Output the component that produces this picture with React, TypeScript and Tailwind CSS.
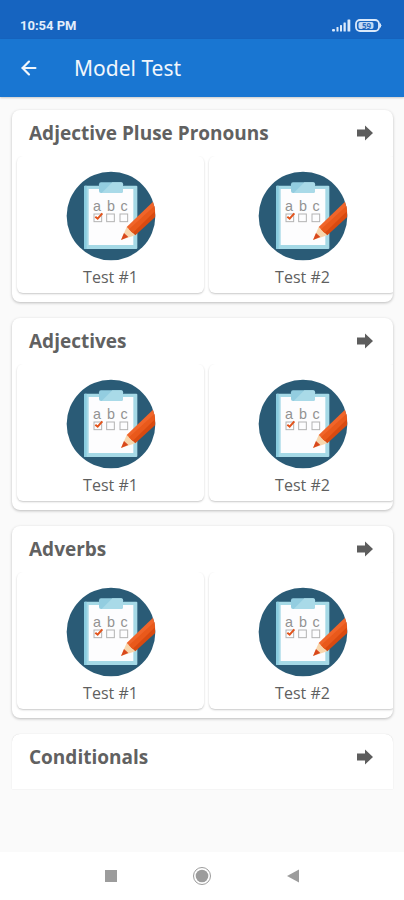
import { ArrowLeft } from 'lucide-react';

interface TestGroup {
  title: string;
  tests: string[];
}

const groups: TestGroup[] = [
  { title: 'Adjective Pluse Pronouns', tests: ['Test #1', 'Test #2'] },
  { title: 'Adjectives', tests: ['Test #1', 'Test #2'] },
  { title: 'Adverbs', tests: ['Test #1', 'Test #2'] },
  { title: 'Conditionals', tests: [] },
];

function SignalIcon() {
  return (
    <svg width="19" height="13" viewBox="0 0 19 13" fill="#dbe9fa" aria-hidden="true">
      <rect x="0" y="10" width="3" height="2.5" rx="1" />
      <rect x="4.5" y="8" width="2" height="4.5" rx="0.5" />
      <rect x="8" y="6" width="2" height="6.5" rx="0.5" />
      <rect x="11.5" y="3.5" width="2.3" height="9" rx="0.5" />
      <rect x="15.5" y="0.5" width="2.8" height="12" rx="0.5" />
    </svg>
  );
}

function BatteryIcon() {
  return (
    <svg width="27" height="13" viewBox="0 0 27 13" aria-hidden="true">
      <rect x="1" y="1" width="23" height="11" rx="4" fill="none" stroke="#dbe9fa" strokeWidth="1.8" />
      <rect x="3.5" y="3" width="15" height="7" rx="2" fill="#c3daf5" />
      <path d="M25 4.5 q2 2 0 4z" fill="#dbe9fa" stroke="#dbe9fa" />
      <text x="11.5" y="9.5" fontSize="8" fontWeight="700" textAnchor="middle" fill="#2b6cc0">59</text>
    </svg>
  );
}

function ClipboardIcon() {
  return (
    <svg className="size-[90px]" viewBox="33 33 270 270" aria-hidden="true">
      <circle cx="168" cy="168" r="133" fill="#2a5b76" />
      <rect x="87" y="77" width="160" height="190" rx="3" fill="#a5d9e6" />
      <path d="M87 80 q0-3 3-3 h5 v190 h-5 q-3 0-3-3z" fill="#8accdf" />
      <rect x="101" y="87" width="134" height="168" fill="#fdfdfe" />
      <path d="M138 67 h60 q6 0 6 6 v20 q0 6-6 6 h-60 q-6 0-6-6 v-20 q0-6 6-6z" fill="#93cde0" />
      <path d="M140 99 l32-32 h26 q6 0 6 6 v20 q0 6-6 6z" fill="#a9dae8" />
      <g fontSize="43" textAnchor="middle" fill="#929292" className="font-['Liberation_Sans',sans-serif]">
        <text x="126" y="154">a</text>
        <text x="168" y="154">b</text>
        <text x="207" y="154">c</text>
      </g>
      <g fill="none" stroke="#b3b3b3" strokeWidth="3">
        <rect x="117" y="162" width="23" height="23" />
        <rect x="155" y="162" width="23" height="23" />
        <rect x="195" y="162" width="23" height="23" />
      </g>
      <path d="M121 170 l7 6 14-16" fill="none" stroke="#e3541c" strokeWidth="6" />
      <path d="M198 240 l17-39 26 25z" fill="#f8d6ac" />
      <path d="M198 240 l9-21 13 12z" fill="#d9481c" />
      <path d="M215 201 L294 125 Q299 139 300 152 L230 216z" fill="#f0652a" />
      <path d="M228 214 L300 148 Q301 165 300 172 L241 226z" fill="#d94a10" />
      <path d="M222 208 L298 138 L300 154 L233 219z" fill="#e9591b" />
    </svg>
  );
}

function ForwardIcon() {
  return (
    <svg width="16" height="16" viewBox="0 0 16 16" fill="#5d5d5d" aria-hidden="true">
      <path d="M0 4.5 h8 V0.5 L16 8 L8 15.5 V11.5 H0z" />
    </svg>
  );
}

function GroupCard({ title, tests }: TestGroup) {
  const empty = tests.length === 0;

  return (
    <section
      className={
        empty
          ? 'rounded-t-lg bg-white pb-[9px] shadow-[0_0_1px_rgba(0,0,0,0.2)]'
          : 'overflow-hidden rounded-lg bg-white shadow-[0_1px_3px_rgba(0,0,0,0.25)]'
      }
    >
      <div className="flex h-[46px] items-center justify-between pr-5 pl-[17px]">
        <h2 className="text-[19px] leading-6 font-bold text-[#616161]">{title}</h2>
        <button aria-label={`Open ${title}`}>
          <ForwardIcon />
        </button>
      </div>
      {!empty && (
        <div className="flex gap-[5px] overflow-x-auto pb-[9px] pl-[5px] [scrollbar-width:none]">
          {tests.map((test) => (
            <button
              key={test}
              className="flex w-[187px] shrink-0 flex-col items-center rounded-md bg-white pt-[15px] pb-1 shadow-[0_1px_2px_rgba(0,0,0,0.22)]"
            >
              <ClipboardIcon />
              <span className="mt-1 text-base leading-6 text-[#5f5f5f]">{test}</span>
            </button>
          ))}
        </div>
      )}
    </section>
  );
}

export default function App() {
  return (
    <div className="flex min-h-screen flex-col bg-[#fafafa] font-['Open_Sans','Noto_Sans',sans-serif]">
      <div className="flex h-[39px] items-center justify-between bg-[#1664c0] pt-3 pr-[22px] pl-5 text-[#e3eefb]">
        <span className="font-['Roboto',sans-serif] text-[13px] leading-4 font-bold">10:54 PM</span>
        <div className="flex items-center gap-1">
          <SignalIcon />
          <BatteryIcon />
        </div>
      </div>

      <header className="flex h-[58px] items-center gap-[34px] bg-[#1976d2] pl-[18px] text-[#f1f6fc] shadow-[0_1px_2px_rgba(0,0,0,0.2)]">
        <button aria-label="Back">
          <ArrowLeft size={22} strokeWidth={2.4} />
        </button>
        <h1 className="font-['Noto_Sans','Open_Sans',sans-serif] text-[21px] leading-7">Model Test</h1>
      </header>

      <main className="flex flex-1 flex-col gap-4 pt-[13px] pr-[11px] pb-4 pl-3">
        {groups.map((group) => (
          <GroupCard key={group.title} {...group} />
        ))}
      </main>

      <nav className="flex h-12 items-center justify-center gap-[73px] bg-white text-[#9c9c9c]">
        <button aria-label="Recent apps">
          <svg width="16" height="16" viewBox="0 0 16 16" aria-hidden="true">
            <rect x="2" y="2" width="12" height="12" fill="currentColor" />
          </svg>
        </button>
        <button aria-label="Home">
          <svg width="20" height="20" viewBox="0 0 20 20" fill="currentColor" aria-hidden="true">
            <circle cx="10" cy="10" r="8.5" fill="none" stroke="currentColor" />
            <circle cx="10" cy="10" r="6.3" />
          </svg>
        </button>
        <button aria-label="Previous">
          <svg width="16" height="16" viewBox="0 0 16 16" aria-hidden="true">
            <path d="M2 8 L14 1.5 V14.5z" fill="currentColor" />
          </svg>
        </button>
      </nav>
    </div>
  );
}
